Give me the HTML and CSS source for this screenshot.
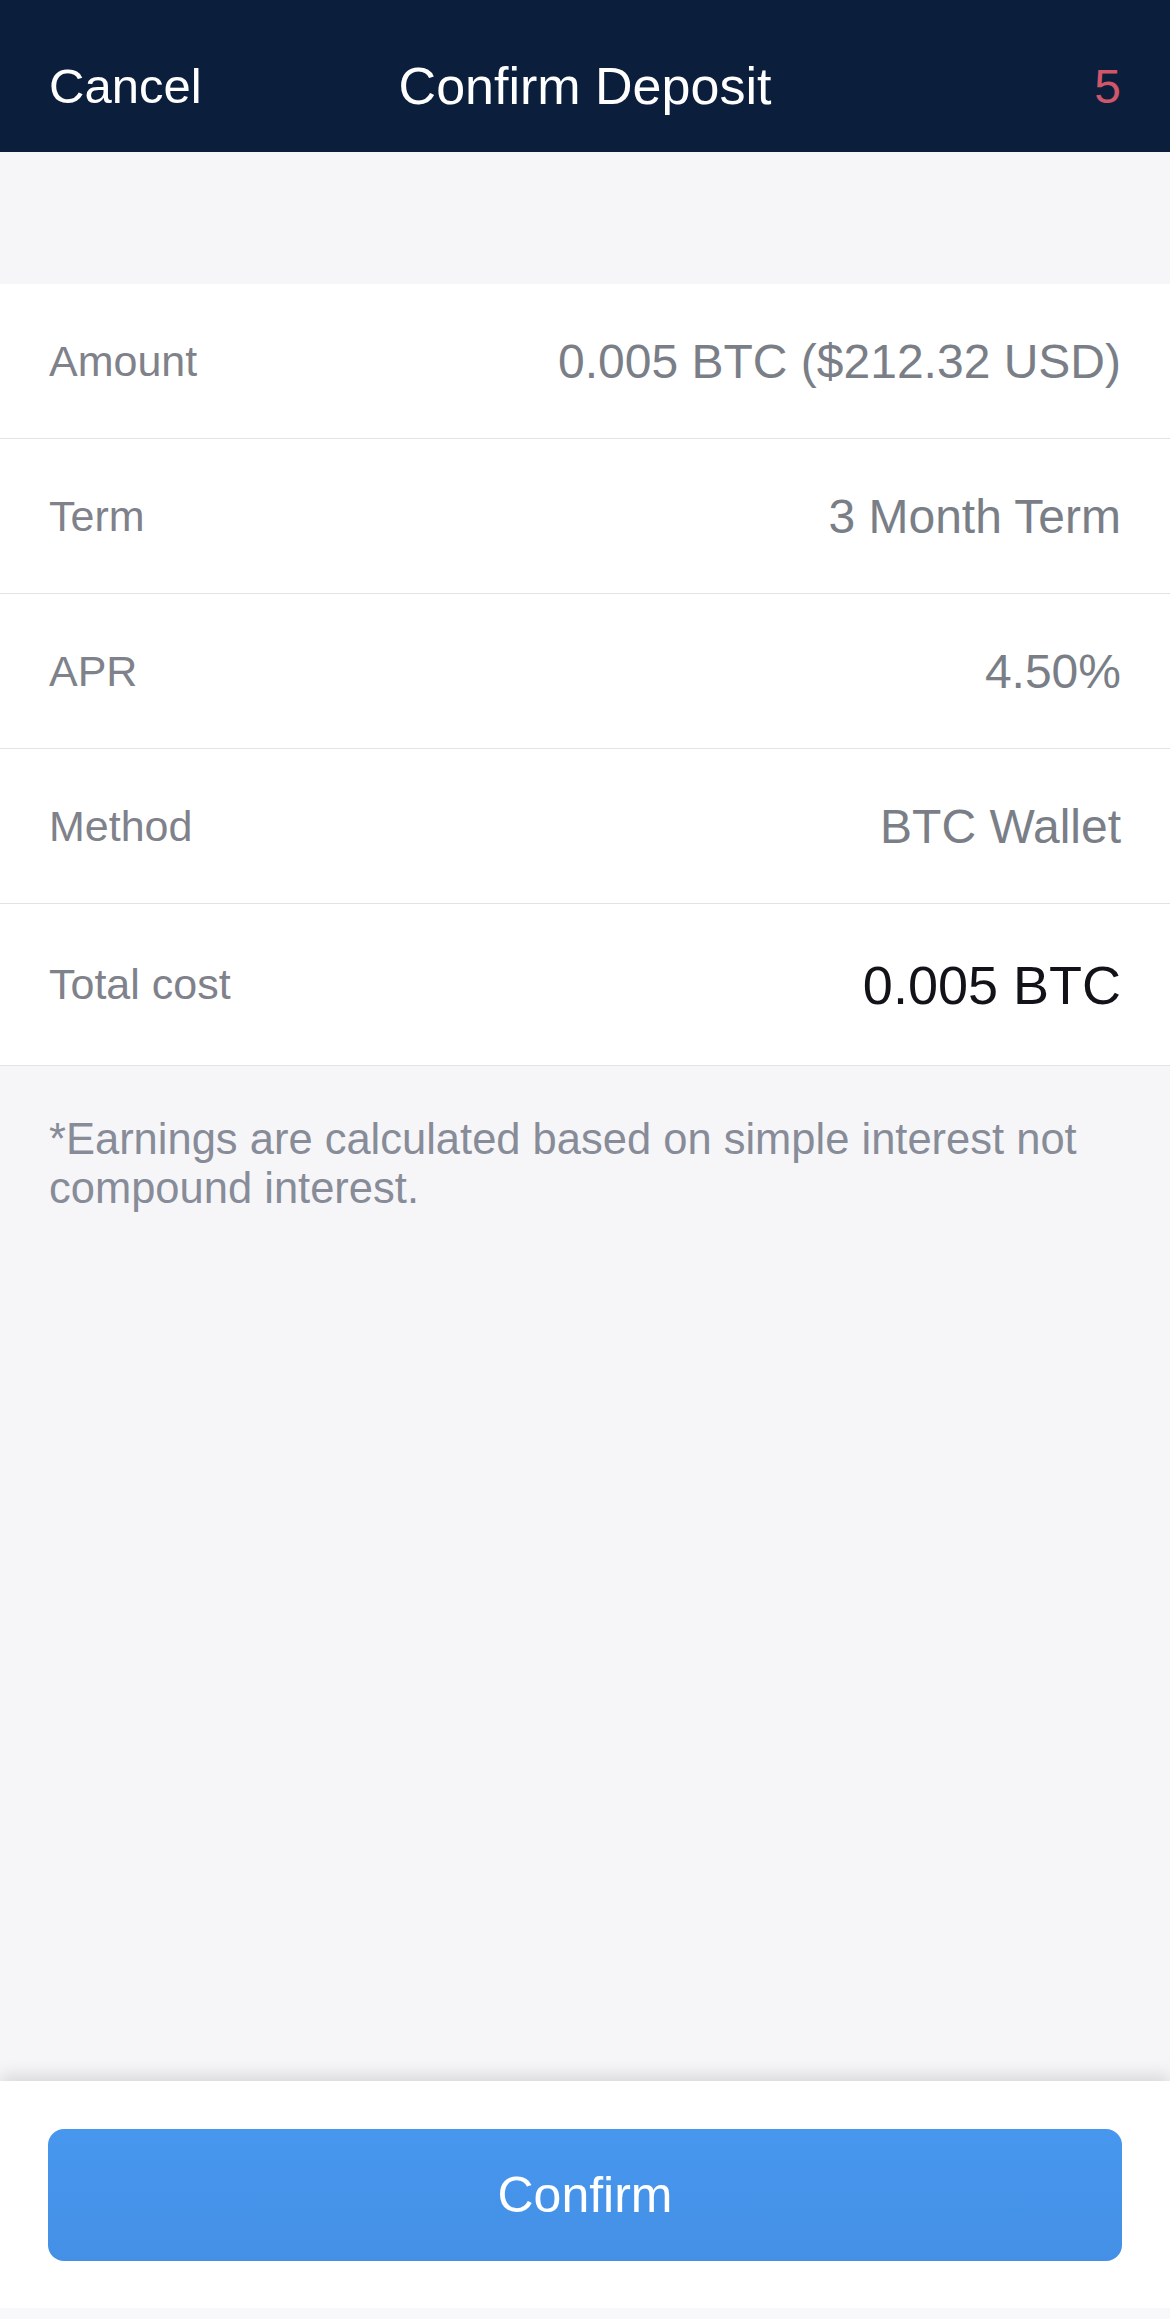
FILE: index.html
```html
<!DOCTYPE html>
<html lang="en">
<head>
    <meta charset="UTF-8">
    <meta name="viewport" content="width=device-width, initial-scale=1.0">
    <title>Confirm Deposit</title>
    <link rel="stylesheet" href="styles.css">
</head>
<body>

    <div class="cabecalho">
        <div class="cancelar">Cancel</div>
        <div class="titulo">Confirm Deposit</div>
        <div class="contador">5</div>
    </div>

    <div class="espaco"></div>

    <ul class="detalhes">
        <li><span class="rotulo">Amount</span><span class="valor">0.005 BTC ($212.32 USD)</span></li>
        <li><span class="rotulo">Term</span><span class="valor">3 Month Term</span></li>
        <li><span class="rotulo">APR</span><span class="valor">4.50%</span></li>
        <li><span class="rotulo">Method</span><span class="valor">BTC Wallet</span></li>
        <li class="total"><span class="rotulo">Total cost</span><span class="valor">0.005 BTC</span></li>
    </ul>

    <p class="nota">*Earnings are calculated based on simple interest not compound interest.</p>

    <div class="rodape">
        <button>Confirm</button>
    </div>
    <div class="barra"></div>

</body>
</html>
```

FILE: styles.css
```css
* {
    margin: 0;
    padding: 0;
    box-sizing: border-box;
    font-family: "Liberation Sans", Arial, sans-serif;
}

body {
    background: #f6f6f8;
    min-height: 2319px;
    display: flex;
    flex-direction: column;
}

.cabecalho {
    height: 152px;
    background: #0b1f3d;
    color: white;
    display: grid;
    grid-template-columns: 1fr auto 1fr;
    align-items: center;
    padding: 20px 49px 0 49px;
    font-size: 52px;
}

.cancelar {
    font-size: 49px;
}

.contador {
    text-align: right;
    color: #d0566a;
    font-size: 48px;
}

.espaco {
    height: 132px;
}

.detalhes {
    list-style: none;
    background: white;
}

li {
    height: 155px;
    padding: 0 49px 0 49px;
    border-bottom: 1px solid #e3e3e6;
    display: flex;
    justify-content: space-between;
    align-items: center;
}

li.total {
    height: 162px;
}

.rotulo {
    font-size: 43px;
    color: #7f828a;
}

.valor {
    font-size: 48px;
    color: #7a7e87;
}

.total .valor {
    font-size: 54px;
    color: #111318;
}

.nota {
    padding: 49px 49px 0 49px;
    font-size: 43.5px;
    line-height: 49px;
    color: #878c98;
    flex: 1;
}

.rodape {
    background: white;
    padding: 48px;
    height: 227px;
    box-shadow: 0 -6px 16px rgba(0, 0, 0, 0.12);
}

button {
    width: 100%;
    height: 132px;
    border: none;
    border-radius: 16px;
    background: linear-gradient(#4797ee, #4490e6);
    color: white;
    font-size: 50px;
    cursor: pointer;
}

.barra {
    height: 11px;
    background: #f8f8fa;
}
```
